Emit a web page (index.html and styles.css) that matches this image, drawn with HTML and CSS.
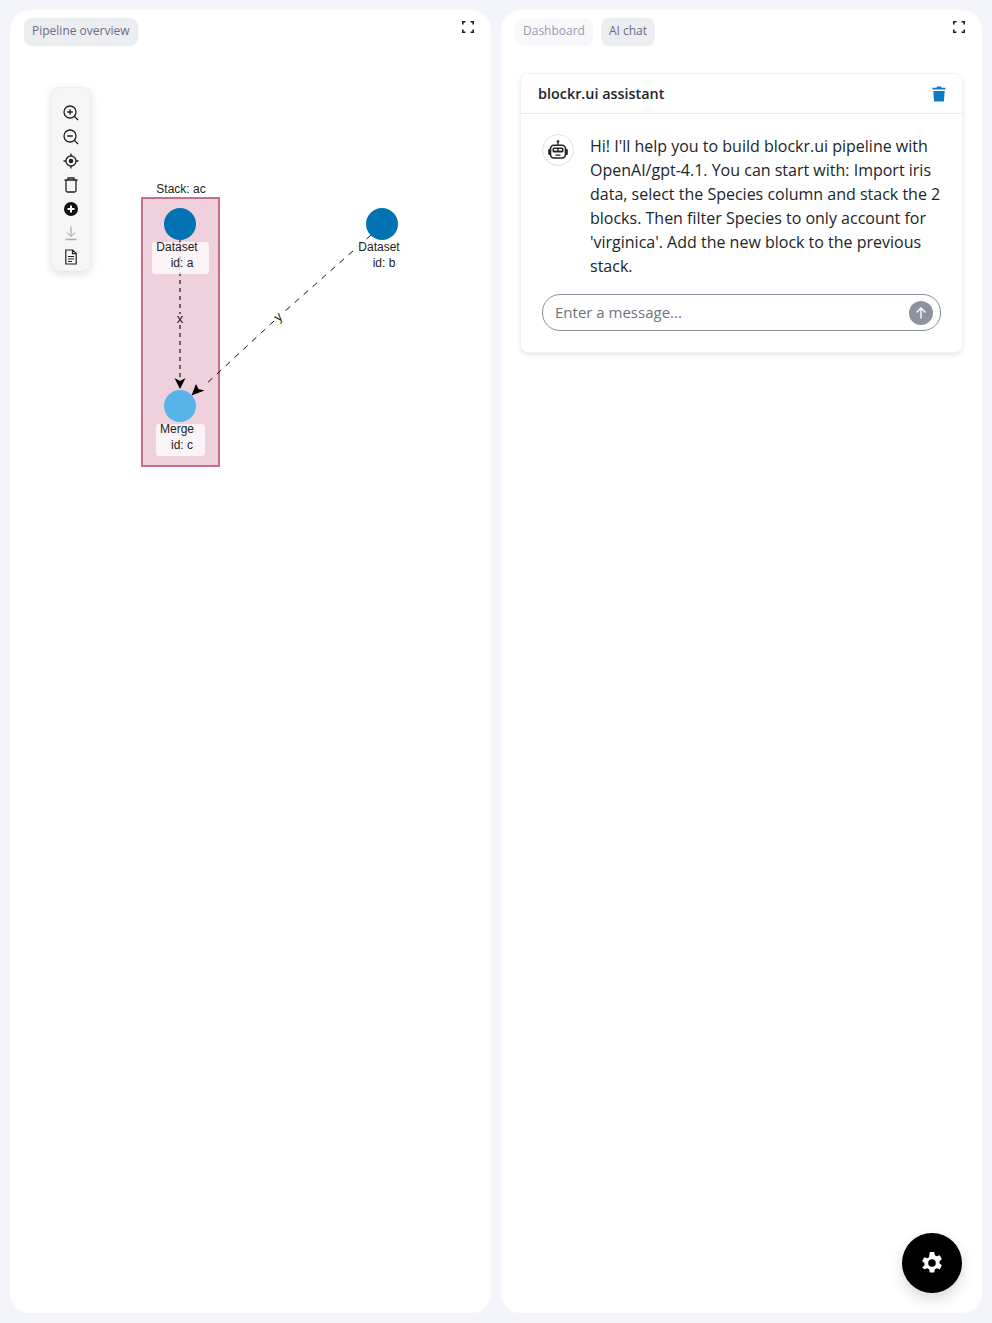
FILE: index.html
```html
<!DOCTYPE html>
<html lang="en">
<head>
    <meta charset="UTF-8">
    <meta name="viewport" content="width=device-width, initial-scale=1.0">
    <title>blockr.ui</title>
    <link rel="stylesheet" href="styles.css">
</head>
<body>
    <div class="layout">
        <section class="panel">
            <div class="panel-head">
                <div class="tabs">
                    <span class="tab active">Pipeline overview</span>
                </div>
                <button class="expand" type="button" aria-label="Expand">
                    <svg width="12" height="12" viewBox="0 0 12 12"><path d="M.8 3.500V.8h2.700M8.500.8h2.700v2.700M11.200 8.500v2.700H8.500M3.500 11.200H.8V8.500" fill="none" stroke="#222" stroke-width="1.600"/></svg>
                </button>
            </div>

            <div class="graph">
                <svg class="graph-canvas" width="481" height="1250" viewBox="0 0 481 1250">
                    <g transform="translate(-10 -63)">
                        <text class="graph-label" x="181" y="193" text-anchor="middle">Stack: ac</text>
                        <rect x="142" y="198" width="77" height="268" fill="#eed1dc" stroke="#c76d90" stroke-width="2"/>

                        <path d="M180 240V314M180 325V380" stroke="#666" stroke-width="2" stroke-dasharray="4 4"/>
                        <path d="M371 235L284 312M274 321L205 385" stroke="#111" stroke-width="1" stroke-dasharray="6 6"/>

                        <path d="M174.500 378L180 381L185.500 378L180 389Z" fill="#000"/>
                        <path d="M191.500 395.500L196 384L198.500 389L204.500 390.500Z" fill="#000"/>
                        <text class="edge-label" x="180" y="323" text-anchor="middle">x</text>
                        <text class="edge-label" text-anchor="middle" transform="translate(281 320) rotate(-42)">y</text>

                        <rect class="label-box" x="152" y="242" width="57" height="32" rx="3"/>
                        <rect class="label-box" x="354" y="242" width="57" height="32" rx="3"/>
                        <rect class="label-box" x="156" y="424" width="49" height="32" rx="3"/>

                        <circle cx="180" cy="224" r="16" fill="#0173b2"/>
                        <circle cx="382" cy="224" r="16" fill="#0173b2"/>
                        <circle cx="180" cy="406" r="16" fill="#56b4e9"/>

                        <text class="graph-label" x="177" y="251" text-anchor="middle">Dataset</text>
                        <text class="graph-label" x="182" y="267" text-anchor="middle">id: a</text>
                        <text class="graph-label" x="379" y="251" text-anchor="middle">Dataset</text>
                        <text class="graph-label" x="384" y="267" text-anchor="middle">id: b</text>
                        <text class="graph-label" x="177" y="433" text-anchor="middle">Merge</text>
                        <text class="graph-label" x="182" y="449" text-anchor="middle">id: c</text>
                    </g>
                </svg>

                <div class="toolbar">
                    <svg width="16" height="16" viewBox="0 0 16 16"><circle cx="7" cy="7" r="6" fill="none" stroke="#222" stroke-width="1.300"/><path d="M11.300 11.300L15 15M7 4.200v5.600M4.200 7h5.600" stroke="#222" stroke-width="1.300" fill="none"/></svg>
                    <svg width="16" height="16" viewBox="0 0 16 16"><circle cx="7" cy="7" r="6" fill="none" stroke="#222" stroke-width="1.300"/><path d="M11.300 11.300L15 15M4.200 7h5.600" stroke="#222" stroke-width="1.300" fill="none"/></svg>
                    <svg width="16" height="16" viewBox="0 0 16 16"><circle cx="8" cy="8" r="5" fill="none" stroke="#222" stroke-width="1.300"/><circle cx="8" cy="8" r="2.300" fill="#222"/><path d="M8 .5v2.500M8 13v2.500M.5 8H3M13 8h2.500" stroke="#222" stroke-width="1.300"/></svg>
                    <svg width="16" height="16" viewBox="0 0 16 16"><path d="M3 3.500V13.500a1.500 1.500 0 0 0 1.500 1.500h7a1.500 1.500 0 0 0 1.500-1.500V3.500M1.500 3h13M5 3V1h6V3" fill="none" stroke="#222" stroke-width="1.300"/></svg>
                    <svg width="16" height="16" viewBox="0 0 16 16"><circle cx="8" cy="8" r="7" fill="#111"/><path d="M8 4.500v7M4.500 8h7" stroke="#fff" stroke-width="2"/></svg>
                    <svg width="16" height="16" viewBox="0 0 16 16"><path d="M8 1.500v9.500M4 7.500L8 11.500L12 7.500" fill="none" stroke="#999" stroke-width="1"/><path d="M2.500 14.500h11" stroke="#aaa" stroke-width="1.400"/></svg>
                    <svg width="16" height="16" viewBox="0 0 16 16"><path d="M2.800 1h7l3.400 3.400V15H2.800ZM9.500 1v3.700h3.700M5 7.500h6M5 10h6M5 12.500h4" fill="none" stroke="#222" stroke-width="1.200"/></svg>
                </div>
            </div>
        </section>

        <section class="panel">
            <div class="panel-head">
                <div class="tabs">
                    <span class="tab">Dashboard</span>
                    <span class="tab active">AI chat</span>
                </div>
                <button class="expand" type="button" aria-label="Expand">
                    <svg width="12" height="12" viewBox="0 0 12 12"><path d="M.8 3.500V.8h2.700M8.500.8h2.700v2.700M11.200 8.500v2.700H8.500M3.500 11.200H.8V8.500" fill="none" stroke="#222" stroke-width="1.600"/></svg>
                </button>
            </div>

            <div class="card">
                <div class="card-head">
                    <span class="card-title">blockr.ui assistant</span>
                    <svg width="14" height="16" viewBox="0 0 14 16"><path d="M5 .5h4l.6 1.300H13.500v1.700H.5V1.800H4.400ZM1.300 5h11.400l-.8 10.500H2.100Z" fill="#0d7bc4"/></svg>
                </div>
                <div class="card-body">
                    <div class="message">
                        <div class="avatar">
                            <svg width="20" height="20" viewBox="0 0 20 20">
                                <circle cx="10" cy="1.500" r="1.300" fill="#222"/>
                                <path d="M10 2v3" stroke="#222" stroke-width="1.300"/>
                                <rect x="2.500" y="5.200" width="15" height="12.800" rx="3.500" fill="none" stroke="#222" stroke-width="1.600"/>
                                <rect x=".2" y="9" width="2" height="6" rx="1" fill="#222"/>
                                <rect x="17.800" y="9" width="2" height="6" rx="1" fill="#222"/>
                                <rect x="4.500" y="7.500" width="11" height="5" rx="1.500" fill="#222"/>
                                <rect x="6" y="9" width="3.300" height="1.600" fill="#fff"/>
                                <rect x="10.700" y="9" width="3.300" height="1.600" fill="#fff"/>
                                <path d="M7.500 15.200h5" stroke="#222" stroke-width="1.300"/>
                            </svg>
                        </div>
                        <p class="message-text">Hi! I'll help you to build blockr.ui pipeline with OpenAI/gpt-4.1. You can start with: Import iris data, select the Species column and stack the 2 blocks. Then filter Species to only account for 'virginica'. Add the new block to the previous stack.</p>
                    </div>
                    <div class="composer">
                        <span class="placeholder">Enter a message...</span>
                        <span class="send">
                            <svg width="14" height="14" viewBox="0 0 14 14"><path d="M7 12.500V2M2.500 6.500L7 2L11.500 6.500" fill="none" stroke="#fff" stroke-width="1.400"/></svg>
                        </span>
                    </div>
                </div>
            </div>
        </section>
    </div>

    <button class="fab" type="button" aria-label="Settings">
        <svg width="24" height="24" viewBox="0 0 24 24"><path fill-rule="evenodd" d="M9.800 1h4.400l.7 3.200 1.700 1 3.100-1 2.200 3.800-2.400 2.200v2l2.400 2.200-2.200 3.800-3.100-1-1.700 1-.7 3.200H9.800l-.7-3.200-1.700-1-3.100 1L2.100 16.400l2.400-2.200v-2L2.100 10 4.300 6.200l3.100 1 1.700-1zM12 8.200a3.800 3.800 0 1 0 0 7.600 3.800 3.800 0 0 0 0-7.600z" fill="#fff"/></svg>
    </button>
</body>
</html>
```

FILE: styles.css
```css
body {
    margin: 0;
    background-color: #f4f5fb;
    font-family: "Open Sans", sans-serif;
    color: #212529;
}

.layout {
    display: grid;
    grid-template-columns: 481px 481px;
    gap: 10px;
    padding: 10px;
    height: 1303px;
}

.panel {
    background: white;
    border-radius: 20px;
    position: relative;
    height: 1303px;
    overflow: hidden;
}

.panel-head {
    display: flex;
    justify-content: space-between;
    align-items: flex-start;
    padding: 8px 14px 0 14px;
}

.tabs {
    display: flex;
    gap: 8px;
}

.tab {
    font-size: 12px;
    line-height: 26px;
    height: 28px;
    padding: 0 8px;
    border-radius: 8px;
    background: #f8f8fa;
    color: #9a9ab0;
}

.tab.active {
    background: #ecedf1;
    color: #6c6c85;
}

.expand {
    border: none;
    background: none;
    padding: 3px;
    display: flex;
    cursor: pointer;
}

.graph {
    position: absolute;
    left: 0;
    top: 53px;
    width: 481px;
    height: 1250px;
}

.graph-canvas {
    display: block;
}

.graph-label {
    font-family: "Liberation Sans", Arial, sans-serif;
    font-size: 12px;
    fill: #222;
}

.edge-label {
    font-family: "Liberation Sans", Arial, sans-serif;
    font-size: 13px;
    fill: #222;
}

.label-box {
    fill: white;
    fill-opacity: 0.75;
}

.toolbar {
    position: absolute;
    left: 41px;
    top: 24px;
    width: 40px;
    height: 184px;
    box-sizing: border-box;
    padding-top: 17px;
    display: flex;
    flex-direction: column;
    align-items: center;
    gap: 8px;
    background: #f6f6f6;
    border: 1px solid #efefef;
    border-radius: 8px;
    box-shadow: 0 3px 8px rgba(0, 0, 0, 0.12);
}

.card {
    margin: 27px 19px 0 19px;
    background: white;
    border: 1px solid #f3f4f6;
    border-radius: 8px;
    box-shadow: 0 2px 4px rgba(0, 0, 0, 0.1);
}

.card-head {
    height: 39px;
    padding: 0 16px 0 17px;
    display: flex;
    justify-content: space-between;
    align-items: center;
    border-bottom: 1px solid #e7e8ea;
}

.card-title {
    font-size: 14.4px;
    font-weight: 600;
}

.card-body {
    padding: 20px 21px 21px 21px;
}

.message {
    display: flex;
    gap: 16px;
}

.avatar {
    flex: none;
    width: 30px;
    height: 30px;
    border: 1px solid #dee2e6;
    border-radius: 50%;
    display: flex;
    align-items: center;
    justify-content: center;
}

.message-text {
    margin: 0;
    font-size: 16px;
    line-height: 24px;
}

.composer {
    margin-top: 16px;
    height: 35px;
    border: 1px solid #868e9b;
    border-radius: 18px;
    display: flex;
    align-items: center;
    justify-content: space-between;
    padding: 0 7px 0 12px;
}

.placeholder {
    font-size: 15px;
    line-height: 20px;
    margin-top: -2px;
    color: #6c757d;
}

.send {
    width: 24px;
    height: 24px;
    border-radius: 50%;
    background: #8d939c;
    display: flex;
    align-items: center;
    justify-content: center;
}

.fab {
    position: absolute;
    left: 902px;
    top: 1233px;
    width: 60px;
    height: 60px;
    border: none;
    border-radius: 50%;
    background: black;
    display: flex;
    align-items: center;
    justify-content: center;
    box-shadow: 0 6px 14px rgba(0, 0, 0, 0.15);
    cursor: pointer;
}
```
